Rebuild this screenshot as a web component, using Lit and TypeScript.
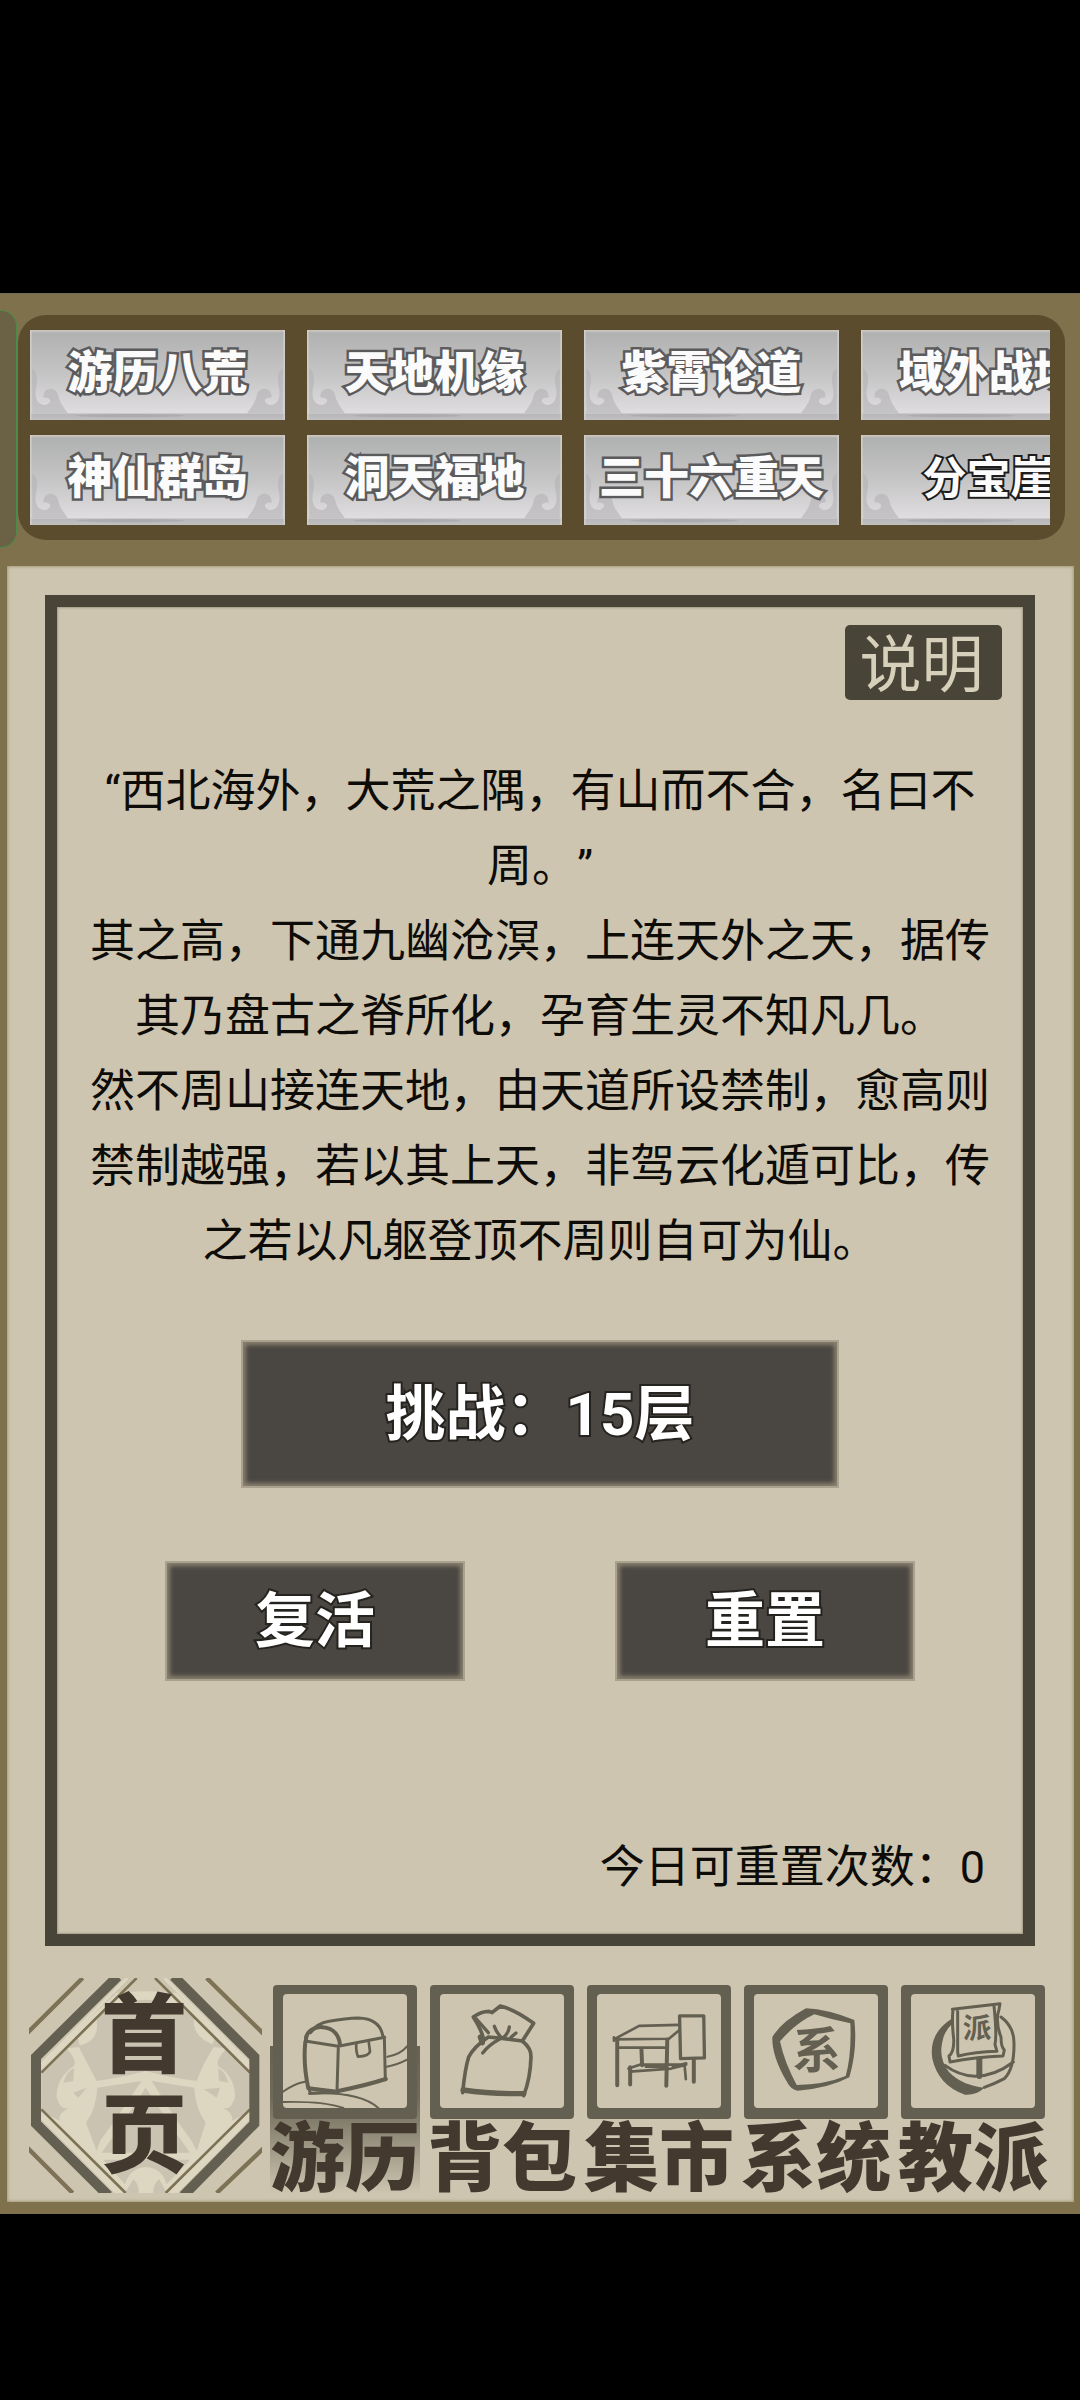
import { LitElement, html, css, svg, TemplateResult } from "lit";
import { customElement, property } from "lit/decorators.js";
import { classMap } from "lit/directives/class-map.js";

const chestIcon = svg`
  <svg viewBox="852 219 372 342" aria-hidden="true">
    <g class="ink">
      <path stroke-width="6" d="M852 512Q885 488 918 482M852 543Q975 540 1033 561M930 518Q1080 510 1138 561M1165 407Q1205 400 1224 376M1163 437Q1195 432 1224 416"/>
      <path stroke-width="12" d="M919 362Q912 430 928 502L1014 512M921 360C918 330 950 315 972 319C1005 322 1021 345 1023 372"/>
      <path stroke-width="9" d="M923 361Q980 370 1018 376L1157 349M1018 376L1014 512M935 335Q955 306 990 301Q1040 292 1078 291Q1145 293 1152 349M1156 349L1159 476M930 502L934 517L1018 513"/>
      <path stroke-width="13" d="M1018 510Q1105 492 1160 474"/>
      <path stroke-width="8" d="M1072 367Q1070 390 1077 407Q1110 405 1113 392L1109 361"/>
    </g>
  </svg>`;

const bagIcon = svg`
  <svg viewBox="117 216 372 342" aria-hidden="true">
    <g class="ink">
      <path stroke-width="11" d="M246 345Q240 322 217 285Q240 268 264 268L273 272L298 252Q340 262 398 304L364 357L303 349L262 345Q218 375 203 405Q192 440 185 512"/>
      <path stroke-width="11" d="M364 357Q392 380 390 405Q388 470 368 521"/>
      <path stroke-width="16" d="M186 504Q270 516 368 515M238 345L244 362"/>
      <path stroke-width="10" d="M280 313Q288 335 303 348M325 315Q322 335 306 348M345 333L330 346M296 351Q262 370 245 393M225 290L262 332"/>
    </g>
  </svg>`;

const stallIcon = svg`
  <svg viewBox="591 216 374 342" aria-hidden="true">
    <g class="ink">
      <path stroke-width="8" d="M642 352L718 311L838 308M642 352L808 350L838 325M660 377H798M642 346V356M686 440L722 428L860 428M690 449L815 440L858 429M855 428L859 472M738 434H800M820 434L860 424"/>
      <path stroke-width="12" d="M652 354V490M803 352L800 492M691 436V488M725 380L727 430M883 414V480"/>
      <path stroke-width="10" d="M840 281H913L915 408L843 410Z"/>
    </g>
  </svg>`;

const systemIcon = svg`
  <svg viewBox="69 216 372 342" aria-hidden="true">
    <path class="solid" fill-rule="evenodd" d="M225 259Q290 262 370 294Q380 380 355 466Q290 500 200 506Q180 505 165 475Q122 400 124 345Q150 300 225 259ZM250 277Q195 302 147 358Q160 420 197 489Q280 488 344 462Q362 400 358 304Q300 292 250 277Z"/>
    <text class="sign" x="257" y="438" font-size="146">系</text>
  </svg>`;

const sectIcon = svg`
  <svg viewBox="548 216 372 342" aria-hidden="true">
    <path class="solid" d="M670 290Q600 335 612 410Q630 490 710 518Q745 520 768 497Q700 490 662 450Q630 410 642 360Q648 325 672 305Z"/>
    <g class="ink">
      <path stroke-width="9" d="M818 285Q858 315 857 365Q858 440 828 470Q800 485 768 496M855 420Q800 462 740 463Q690 460 650 430M672 262Q740 254 815 245L812 262Q800 300 818 345Q818 375 828 384L824 402Q740 405 665 420L662 402Q678 390 676 350Q670 300 674 262M688 268V390L690 402Q740 390 806 388L800 368Q806 340 797 252"/>
      <path stroke-width="18" d="M753 412V462"/>
    </g>
    <text class="sign" x="746" y="348" font-size="86">派</text>
  </svg>`;

const homeEmblem = svg`
  <svg class="emblem" viewBox="87 171 699 645" aria-hidden="true">
    <path fill="#ddd6c1" d="M350 216Q437 205 530 216L750 425V590L527 816H350L124 590V425Z"/>
    <g fill="#cac3b1">
      <path d="M300 285Q350 240 437 236Q530 240 582 290Q575 350 645 372Q610 425 590 480Q510 470 437 450Q360 470 290 480L235 375Q300 360 290 300Z"/>
      <path d="M124 455L232 345L240 378L200 382Q232 420 222 435Q168 470 170 530Q182 570 208 560Q170 580 180 600L124 570Z"/>
      <path d="M750 455L645 345L636 378L680 382Q645 420 655 435Q707 470 705 530Q692 570 668 560Q705 580 695 600L750 570Z"/>
      <path d="M292 500L425 480L350 590L300 660L290 690L258 605Q290 560 292 500Z"/>
      <path d="M583 500L455 480L525 590L575 660L590 690L617 605Q585 560 583 500Z"/>
      <path d="M437 500L520 625L570 695H305L355 625Z"/>
      <path d="M310 716H570L500 790Q485 740 437 738Q390 740 375 790Z"/>
      <path d="M400 775Q418 790 416 816H375ZM478 775Q458 790 460 816H500Z"/>
      <path d="M190 485Q200 450 222 442L220 480ZM685 485Q675 450 655 442L657 480ZM220 515L260 500L235 530ZM612 505L660 500L650 530Z"/>
    </g>
    <g fill="none" stroke="#ddd6c1" stroke-width="9">
      <path d="M382 171L124 429M493 171L750 429M124 590L350 816M750 590L527 816"/>
    </g>
    <g fill="none" stroke="#7d7255" stroke-width="8">
      <path d="M410 171L124 455M465 171L750 455M124 565L377 816M750 565L497 816"/>
      <path stroke-width="13" d="M248 171L80 338M620 171L795 343M80 678L218 816M795 678L650 816"/>
    </g>
    <g fill="none" stroke="#636052" stroke-width="30">
      <path d="M353 166L108 408V608L325 824M521 166L763 408V608L550 824"/>
    </g>
  </svg>`;

interface NavEntry {
  label: string;
  icon: TemplateResult;
  selected?: boolean;
}

const NAV: NavEntry[] = [
  { label: "游历", icon: chestIcon, selected: true },
  { label: "背包", icon: bagIcon },
  { label: "集市", icon: stallIcon },
  { label: "系统", icon: systemIcon },
  { label: "教派", icon: sectIcon },
];

const PLACES = [
  "游历八荒", "神仙群岛",
  "天地机缘", "洞天福地",
  "紫霄论道", "三十六重天",
  "域外战场", "分宝崖",
];

const STORY = [
  "“西北海外，大荒之隅，有山而不合，名曰不周。”",
  "其之高，下通九幽沧溟，上连天外之天，据传其乃盘古之脊所化，孕育生灵不知凡几。",
  "然不周山接连天地，由天道所设禁制，愈高则禁制越强，若以其上天，非驾云化遁可比，传之若以凡躯登顶不周则自可为仙。",
];

@customElement("place-tile")
class PlaceTile extends LitElement {
  @property() label = "";

  static styles = css`
    :host { display: block; }
    .tile {
      display: grid;
      grid-template: 90px / 100%;
      place-items: center;
      width: 100%;
      margin: 0;
      padding: 0;
      border: 0;
      background: linear-gradient(#c9c4be 0 1px, #b0b1b1 3px, #c6c5c6 45px, #dfdddf 83px, #b7b6b9 84px, #c0bfc1 90px);
      cursor: pointer;
    }
    .tile > * { grid-area: 1 / 1; }
    .curls { width: 100%; height: 90px; }
    .name {
      padding-bottom: 10px;
      font: 900 45px/60px "Noto Sans CJK SC", sans-serif;
      color: #fbfbfb;
      -webkit-text-stroke: 5px #5b5b5d;
      paint-order: stroke fill;
      white-space: nowrap;
    }
    .thin { -webkit-text-stroke: 4px #1d1d1d; font-size: 44px; font-weight: 700; }
  `;

  render() {
    const curl = "M6 116C20 120 22 150 18 168C10 200 20 226 42 225C62 222 62 200 38 203C34 170 75 165 80 200C86 225 98 235 106 250H6Z";
    return html`
      <button class="tile" type="button">
        <svg class="curls" viewBox="0 0 714 270" preserveAspectRatio="none" aria-hidden="true">
          <path d=${curl} fill="#b3b1b4" opacity=".6"></path>
          <path d=${curl} fill="#b3b1b4" opacity=".6" transform="translate(714 0) scale(-1 1)"></path>
          <path d="M2 0V270M712 0V270" stroke="#cfcccb" stroke-width="5"></path>
          <ellipse cx="280" cy="257" rx="150" ry="5" fill="#a3a2a7" opacity=".6"></ellipse>
        </svg>
        <span class=${classMap({ name: true, thin: this.label === "分宝崖" })}>${this.label}</span>
      </button>`;
  }
}

@customElement("app-root")
class AppRoot extends LitElement {
  static styles = css`
    :host {
      display: block;
      box-sizing: border-box;
      min-height: 100vh;
      padding: 293px 0 187px;
      background: #000;
      font-family: Roboto, "Noto Sans CJK SC", sans-serif;
      color: #0d0c08;
    }
    * { box-sizing: border-box; }
    button { margin: 0; padding: 0; border: 0; background: none; font: inherit; color: inherit; cursor: pointer; }

    .game {
      overflow: hidden;
      padding-bottom: 12px;
      background: #7e714c;
      border-top: 1px solid #716d58;
    }
    .places { display: flex; gap: 1px; padding: 16px 15px 18px 0; }
    .prev {
      flex: none;
      width: 17px;
      border: 1px solid #4e8a4a;
      border-left: 0;
      border-radius: 0 16px 16px 0;
      background: #6b6144;
    }
    .board {
      flex: 1;
      min-width: 0;
      margin: 5px 0 8px;
      padding: 15px 15px 15px 12px;
      border-radius: 28px;
      background: #5a4c2c;
    }
    .tiles {
      display: grid;
      grid-auto-flow: column;
      grid-template-rows: auto auto;
      grid-auto-columns: 255px;
      gap: 15px 22px;
      overflow: hidden;
    }

    .sheet {
      margin: 0 6px 0 7px;
      padding: 29px 22px 9px;
      background: #cdc5b0;
      box-shadow: inset 0 0 3px 1px #a79c7c;
    }
    .frame {
      display: flex;
      flex-direction: column;
      margin: 0 17px 0 16px;
      padding: 18px 21px 35px;
      border: 12px solid #484438;
      box-shadow: inset 0 0 2px 1px #a19b8a;
    }
    .explain {
      align-self: flex-end;
      width: 157px;
      height: 75px;
      padding: 0 4px 6px 0;
      border-radius: 5px;
      background: #484438;
      color: #d6cfba;
      font-size: 62px;
      line-height: 66px;
      font-family: KaiTi, "Noto Sans CJK SC", sans-serif;
      font-weight: 400;
    }
    .story {
      align-self: center;
      width: 100%;
      max-width: 900px;
      margin: 54px 0 61px;
      font-size: 45px;
      font-weight: 400;
      line-height: 75px;
      text-align: center;
      text-spacing-trim: space-all;
    }
    .story p { margin: 0; }
    .slab {
      padding-top: 2px;
      background: #4a4641;
      border: 2px solid #aaa28e;
      box-shadow: inset 0 0 4px 3px #88816f;
      color: #fff;
      font-size: 60px;
      font-weight: 700;
      line-height: 80px;
      -webkit-text-stroke: 4px #25231f;
      paint-order: stroke fill;
    }
    .challenge { align-self: center; width: 598px; height: 148px; }
    .pair { display: flex; justify-content: center; gap: 150px; margin: 73px 0 156px; }
    .pair .slab { width: 300px; height: 120px; }
    .remaining {
      margin: 0 17px 0 0;
      font-size: 45px;
      font-weight: 400;
      line-height: 62px;
      text-align: right;
    }

    .nav { display: flex; gap: 8px; margin-top: 32px; }
    .home { display: grid; flex: none; width: 233px; height: 215px; }
    .home > * { grid-area: 1 / 1; }
    .emblem { width: 233px; height: 215px; }
    .home-name {
      display: flex;
      flex-direction: column;
      align-items: center;
      padding: 9px 3px 0 0;
      color: #43392f;
      font-size: 86px;
      font-weight: 900;
      line-height: 100px;
    }
    .entries { display: flex; flex: 1; gap: 7px; }
    .entry { display: flex; flex-direction: column; align-items: center; width: 150px; padding-top: 7px; }
    .selected { background: linear-gradient(transparent 68px, #666152 68px, #6f6a5a 120px, #857f6e 145px, #cdc5b0 215px); }
    .picture {
      width: 144px;
      height: 134px;
      border: solid #636052;
      border-width: 9px 10px 11px;
      border-radius: 4px;
      background: #636052;
    }
    .picture svg { display: block; width: 124px; height: 114px; border-radius: 4px; background: #cdc5b0; }
    .ink { fill: none; stroke: #636052; stroke-linecap: round; stroke-linejoin: round; }
    .solid { fill: #636052; }
    .sign { fill: #636052; font-weight: 700; text-anchor: middle; }
    .entry-name { color: #43392f; font-size: 75px; font-weight: 900; line-height: 80px; white-space: nowrap; }
    .entry { height: 215px; }
  `;

  render() {
    return html`
      <main class="game">
        <section class="places">
          <div class="prev"></div>
          <div class="board">
            <div class="tiles">
              ${PLACES.map((name) => html`<place-tile .label=${name}></place-tile>`)}
            </div>
          </div>
        </section>
        <div class="sheet">
          <section class="frame">
            <button class="explain" type="button">说明</button>
            <div class="story">${STORY.map((text) => html`<p>${text}</p>`)}</div>
            <button class="slab challenge" type="button">挑战：15层</button>
            <div class="pair">
              <button class="slab" type="button">复活</button>
              <button class="slab" type="button">重置</button>
            </div>
            <p class="remaining">今日可重置次数：0</p>
          </section>
          <nav class="nav">
            <button class="home" type="button" aria-label="首页">
              ${homeEmblem}
              <span class="home-name"><span>首</span><span>页</span></span>
            </button>
            <div class="entries">
              ${NAV.map((entry) => html`
                <button class=${classMap({ entry: true, selected: !!entry.selected })} type="button">
                  <span class="picture">${entry.icon}</span>
                  <span class="entry-name">${entry.label}</span>
                </button>`)}
            </div>
          </nav>
        </div>
      </main>`;
  }
}
